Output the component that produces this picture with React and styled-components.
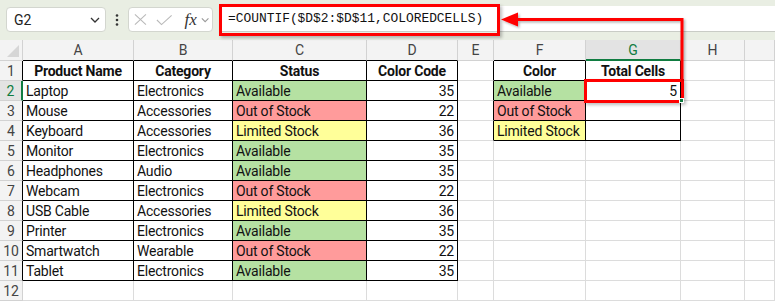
import React from 'react';
import styled, { createGlobalStyle } from 'styled-components';

const Global = createGlobalStyle`
  html, body { margin: 0; padding: 0; background: #fff; }
  body { font-family: Roboto, "Liberation Sans", sans-serif; }
  * { box-sizing: border-box; }
`;

const Page = styled.div`
  position: relative;
  width: 775px;
  height: 302px;
  overflow: hidden;
  background: #fff;
  display: flex;
  flex-direction: column;
`;

const Toolbar = styled.div`
  height: 40px;
  flex: none;
  background: #e9eee3;
  display: flex;
  align-items: flex-start;
  padding: 7px 0 0 6px;
`;

const NameBox = styled.div`
  width: 100px;
  height: 25px;
  background: #fff;
  border: 1px solid #d3d6cf;
  border-radius: 4px;
  display: flex;
  align-items: center;
  justify-content: space-between;
  padding: 0 5px 0 7px;
  font-size: 14px;
  color: #222;
`;

const Dots = styled.div`
  width: 22px;
  height: 25px;
  display: flex;
  align-items: center;
  justify-content: center;
`;

const FxBox = styled.div`
  width: 85px;
  height: 25px;
  background: #fff;
  border: 1px solid #d3d6cf;
  border-radius: 4px;
  display: flex;
  align-items: center;
  padding: 0 3px 0 5px;
  gap: 4px;
`;

const FxText = styled.span`
  font-family: "Liberation Serif", serif;
  font-style: italic;
  font-size: 17px;
  color: #333;
  margin-left: 8px;
  line-height: 1;
`;

const FormulaInput = styled.div`
  flex: 1;
  margin-left: 6px;
  margin-top: -1px;
  height: 26px;
  background: #fff;
  border-bottom: 1px solid #c9ccc6;
  display: flex;
  align-items: center;
  padding-left: 9px;
  font-family: "Liberation Mono", monospace;
  font-size: 12.9px;
  color: #111;
`;

const Grid = styled.div`
  display: grid;
  grid-template-columns: 23px 111px 99px 134px 91px 36px 92px 95px 64px 1fr;
  grid-template-rows: 21px repeat(12, 20px);
`;

const Cell = styled.div`
  border-right: 1px solid ${p => p.$r};
  border-bottom: 1px solid ${p => p.$b};
  background: ${p => p.$bg || '#fff'};
  font-size: 14px;
  color: #111;
  display: flex;
  align-items: center;
  justify-content: ${p => (p.$align === 'right' ? 'flex-end' : p.$align === 'center' ? 'center' : 'flex-start')};
  padding: 0 3px;
  font-weight: ${p => (p.$bold ? 700 : 400)};
  white-space: nowrap;
  overflow: hidden;
  letter-spacing: -0.2px;
`;

const HeadCell = styled.div`
  background: ${p => (p.$sel ? '#e3e3e3' : '#f3f3f3')};
  border-right: ${p => (p.$selRight ? '2px solid #107c41' : `1px solid ${p.$r}`)};
  border-bottom: ${p => (p.$selBottom ? '2px solid #107c41' : `1px solid ${p.$b}`)};
  color: ${p => (p.$sel ? '#107c41' : '#444')};
  font-size: 14px;
  display: flex;
  align-items: center;
  justify-content: center;
  position: relative;
`;

const Corner = styled.div`
  width: 0;
  height: 0;
  border-left: 12px solid transparent;
  border-bottom: 12px solid #d6d6d6;
  position: absolute;
  right: 3px;
  bottom: 3px;
`;

const Frame = styled.div`
  position: absolute;
  border: 3px solid #ff0000;
  box-shadow: 2px 2px 3px rgba(0, 0, 0, 0.25);
  pointer-events: none;
`;

const Overlay = styled.svg`
  position: absolute;
  left: 0;
  top: 0;
  pointer-events: none;
`;

const FillHandle = styled.div`
  position: absolute;
  right: -3px;
  bottom: -3px;
  width: 5px;
  height: 5px;
  background: #107c41;
  border: 1px solid #fff;
`;

const FILLS = {
  'Available': '#b5e1a2',
  'Out of Stock': '#ff9b9b',
  'Limited Stock': '#ffff99',
};

const DATA = [
  ['Product Name', 'Category', 'Status', 'Color Code', '', 'Color', 'Total Cells'],
  ['Laptop', 'Electronics', 'Available', 35, '', 'Available', 5],
  ['Mouse', 'Accessories', 'Out of Stock', 22, '', 'Out of Stock', ''],
  ['Keyboard', 'Accessories', 'Limited Stock', 36, '', 'Limited Stock', ''],
  ['Monitor', 'Electronics', 'Available', 35],
  ['Headphones', 'Audio', 'Available', 35],
  ['Webcam', 'Electronics', 'Out of Stock', 22],
  ['USB Cable', 'Accessories', 'Limited Stock', 36],
  ['Printer', 'Electronics', 'Available', 35],
  ['Smartwatch', 'Wearable', 'Out of Stock', 22],
  ['Tablet', 'Electronics', 'Available', 35],
  [],
];

const COLS = ['A', 'B', 'C', 'D', 'E', 'F', 'G', 'H', ''];
const GRID = '#dcdcdc';
const HEAD_LINE = '#d2d2d2';
const BLACK = '#000';

const inTable = (r, c) =>
  (r >= 1 && r <= 11 && c >= 1 && c <= 4) || (r >= 1 && r <= 4 && c >= 6 && c <= 7);

const ChevronDown = ({ color = '#333', w = 10 }) => (
  <svg width={w} height="6" viewBox="0 0 10 6">
    <path d="M1 1 L5 5 L9 1" fill="none" stroke={color} strokeWidth="1.3" />
  </svg>
);

export default function App() {
  const cells = [];
  for (let c = 0; c <= 9; c++) {
    const bColor = inTable(1, c) ? BLACK : HEAD_LINE;
    cells.push(
      <HeadCell key={`h${c}`} $r={HEAD_LINE} $b={bColor} $sel={c === 7} $selBottom={c === 7}>
        {c === 0 ? <Corner /> : COLS[c - 1] || ''}
      </HeadCell>
    );
  }
  for (let r = 1; r <= 12; r++) {
    const row = DATA[r - 1] || [];
    cells.push(
      <HeadCell
        key={`r${r}`}
        $r={inTable(r, 1) ? BLACK : HEAD_LINE}
        $b={HEAD_LINE}
        $sel={r === 2}
        $selRight={r === 2}
      >
        {r}
      </HeadCell>
    );
    for (let c = 1; c <= 9; c++) {
      const v = row[c - 1];
      const rc = inTable(r, c) || inTable(r, c + 1) ? BLACK : GRID;
      const bc = inTable(r, c) || inTable(r + 1, c) ? BLACK : GRID;
      const isHeader = r === 1 && inTable(r, c);
      const isNum = typeof v === 'number';
      const bg = r > 1 && (c === 3 || c === 6) ? FILLS[v] : undefined;
      cells.push(
        <Cell
          key={`c${r}-${c}`}
          $r={rc}
          $b={bc}
          $bg={bg}
          $bold={isHeader}
          $align={isHeader ? 'center' : isNum ? 'right' : 'left'}
        >
          {v === undefined ? '' : v}
        </Cell>
      );
    }
  }

  return (
    <Page>
      <Global />
      <Toolbar>
        <NameBox>
          <span>G2</span>
          <ChevronDown />
        </NameBox>
        <Dots>
          <svg width="4" height="12" viewBox="0 0 4 12">
            <circle cx="2" cy="1.5" r="1.3" fill="#333" />
            <circle cx="2" cy="6" r="1.3" fill="#333" />
            <circle cx="2" cy="10.5" r="1.3" fill="#333" />
          </svg>
        </Dots>
        <FxBox>
          <svg width="14" height="13" viewBox="0 0 14 13">
            <path d="M1 1 L13 12 M13 1 L1 12" stroke="#b9b9b9" strokeWidth="1.2" fill="none" />
          </svg>
          <svg width="18" height="12" viewBox="0 0 18 12" style={{ marginLeft: 5 }}>
            <path d="M1 6 L6 11 L17 1" stroke="#b9b9b9" strokeWidth="1.2" fill="none" />
          </svg>
          <FxText>fx</FxText>
          <ChevronDown color="#999" w={9} />
        </FxBox>
        <FormulaInput>=COUNTIF($D$2:$D$11,COLOREDCELLS)</FormulaInput>
      </Toolbar>
      <Grid>{cells}</Grid>

      <Frame style={{ left: 219, top: 4, width: 281, height: 32 }} />
      <Frame style={{ left: 584, top: 79, width: 100, height: 24 }}>
        <FillHandle />
      </Frame>
      <Overlay width="775" height="302" viewBox="0 0 775 302">
        <defs>
          <filter id="sh" x="-5%" y="-50%" width="110%" height="200%">
            <feDropShadow dx="1.5" dy="1.5" stdDeviation="1" floodColor="#000" floodOpacity="0.3" />
          </filter>
        </defs>
        <g filter="url(#sh)">
          <path d="M682 79 V19.5 H514" fill="none" stroke="#ff0000" strokeWidth="3" />
          <polygon points="501,19.5 518,12.5 518,26.5" fill="#ff0000" />
        </g>
      </Overlay>
    </Page>
  );
}
